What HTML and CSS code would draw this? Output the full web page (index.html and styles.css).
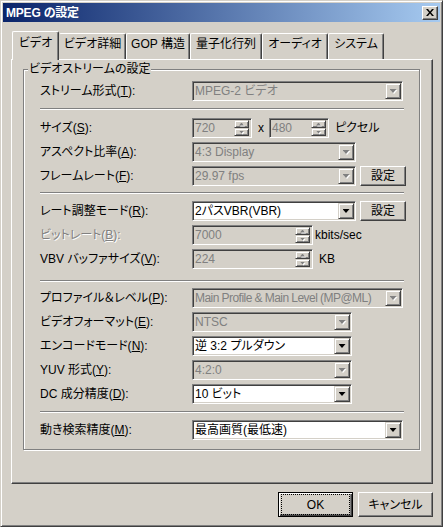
FILE: index.html
```html
<!DOCTYPE html>
<html lang="ja">
<head>
<meta charset="utf-8">
<title>MPEG の設定</title>
<link rel="stylesheet" href="styles.css">
</head>
<body>
<div class="window">
  <div class="titlebar">
    <span class="title">MPEG の設定</span>
    <span class="close"><svg width="8" height="7" viewBox="0 0 8 7"><path d="M0 0h2l2 2.4L6 0h2L5 3.5 8 7H6L4 4.6 2 7H0l3-3.5z"/></svg></span>
  </div>
  <div class="client">
    <div class="tabs">
      <div class="tab active">ビデオ</div>
      <div class="tab w2">ビデオ詳細</div>
      <div class="tab w3">GOP 構造</div>
      <div class="tab w4">量子化行列</div>
      <div class="tab w5">オーディオ</div>
      <div class="tab w6">システム</div>
    </div>
    <div class="panel">
      <div class="group">
        <div class="legend">ビデオストリームの設定</div>

        <div class="row first">
          <span class="lbl">ストリーム形式(<u>T</u>):</span>
          <div class="field dis cw-full"><span class="val">MPEG-2 ビデオ</span><span class="dd"><span class="aw"><i class="arr"></i></span></span></div>
        </div>
        <div class="sep sep1"></div>

        <div class="row">
          <span class="lbl">サイズ(<u>S</u>):</span>
          <div class="field dis sw-small"><span class="val">720</span><span class="spin"><span class="sb"><span class="aw"><i class="up"></i></span></span><span class="sb"><span class="aw"><i class="down"></i></span></span></span></div>
          <span class="times">x</span>
          <div class="field dis sw-small"><span class="val">480</span><span class="spin"><span class="sb"><span class="aw"><i class="up"></i></span></span><span class="sb"><span class="aw"><i class="down"></i></span></span></span></div>
          <span class="unit-px">ピクセル</span>
        </div>
        <div class="row">
          <span class="lbl">アスペクト比率(<u>A</u>):</span>
          <div class="field dis cw-mid"><span class="val">4:3 Display</span><span class="dd"><span class="aw"><i class="arr"></i></span></span></div>
        </div>
        <div class="row">
          <span class="lbl">フレームレート(<u>F</u>):</span>
          <div class="field dis cw-mid"><span class="val">29.97 fps</span><span class="dd"><span class="aw"><i class="arr"></i></span></span></div>
          <button class="btn set">設定</button>
        </div>
        <div class="sep sep2"></div>

        <div class="row">
          <span class="lbl">レート調整モード(<u>R</u>):</span>
          <div class="field cw-mid"><span class="val">2パスVBR(VBR)</span><span class="dd"><span class="aw"><i class="arr"></i></span></span></div>
          <button class="btn set">設定</button>
        </div>
        <div class="row">
          <span class="lbl off">ビットレート(<u>B</u>):</span>
          <div class="field dis sw-big"><span class="val">7000</span><span class="spin"><span class="sb"><span class="aw"><i class="up"></i></span></span><span class="sb"><span class="aw"><i class="down"></i></span></span></span></div>
          <span class="unit-k">kbits/sec</span>
        </div>
        <div class="row">
          <span class="lbl">VBV バッファサイズ(<u>V</u>):</span>
          <div class="field dis sw-big"><span class="val">224</span><span class="spin"><span class="sb"><span class="aw"><i class="up"></i></span></span><span class="sb"><span class="aw"><i class="down"></i></span></span></span></div>
          <span class="unit-kb">KB</span>
        </div>
        <div class="sep sep3"></div>

        <div class="row">
          <span class="lbl">プロファイル＆レベル(<u>P</u>):</span>
          <div class="field dis cw-full"><span class="val tight">Main Profile &amp; Main Level (MP@ML)</span><span class="dd"><span class="aw"><i class="arr"></i></span></span></div>
        </div>
        <div class="row">
          <span class="lbl">ビデオフォーマット(<u>E</u>):</span>
          <div class="field dis cw-short"><span class="val">NTSC</span><span class="dd"><span class="aw"><i class="arr"></i></span></span></div>
        </div>
        <div class="row">
          <span class="lbl">エンコードモード(<u>N</u>):</span>
          <div class="field cw-short"><span class="val">逆 3:2 プルダウン</span><span class="dd"><span class="aw"><i class="arr"></i></span></span></div>
        </div>
        <div class="row">
          <span class="lbl">YUV 形式(<u>Y</u>):</span>
          <div class="field dis cw-short"><span class="val">4:2:0</span><span class="dd"><span class="aw"><i class="arr"></i></span></span></div>
        </div>
        <div class="row">
          <span class="lbl">DC 成分精度(<u>D</u>):</span>
          <div class="field cw-short"><span class="val">10 ビット</span><span class="dd"><span class="aw"><i class="arr"></i></span></span></div>
        </div>
        <div class="sep sep4"></div>

        <div class="row">
          <span class="lbl">動き検索精度(<u>M</u>):</span>
          <div class="field cw-full"><span class="val">最高画質(最低速)</span><span class="dd"><span class="aw"><i class="arr"></i></span></span></div>
        </div>
      </div>
    </div>
    <div class="btnrow">
      <button class="btn big def"><span class="focus">OK</span></button>
      <button class="btn big">キャンセル</button>
    </div>
  </div>
</div>
</body>
</html>
```

FILE: styles.css
```css
* { box-sizing: border-box; }
html, body { margin: 0; padding: 0; }
body {
  width: 443px;
  height: 527px;
  overflow: hidden;
  background: #d4d0c8;
  color: #000;
  font: 12px/14px "Liberation Sans", "Noto Sans CJK JP", sans-serif;
  font-feature-settings: "palt";
}
u { text-decoration: underline; text-underline-offset: 1px; }

.window {
  width: 443px;
  height: 527px;
  background: #d4d0c8;
  border: 1px solid;
  border-color: #d4d0c8 #404040 #404040 #d4d0c8;
  box-shadow: inset 1px 1px 0 #fff, inset -1px -1px 0 #808080;
  padding: 2px;
  display: flex;
  flex-direction: column;
}

.titlebar {
  height: 19px;
  flex: none;
  background: linear-gradient(to right, #0a246a, #a6caf0);
  display: flex;
  align-items: center;
  justify-content: space-between;
  padding: 0 2px 0 3px;
}
.title { color: #fff; font-weight: bold; letter-spacing: -0.2px; }
.close {
  width: 16px;
  height: 14px;
  background: #d4d0c8;
  border: 1px solid;
  border-color: #fff #404040 #404040 #fff;
  box-shadow: inset -1px -1px 0 #808080;
  display: flex;
  align-items: center;
  justify-content: center;
}
.close svg { display: block; fill: #000; }

.client {
  flex: 1;
  display: flex;
  flex-direction: column;
  padding: 9px 7px 0 8px;
}

.tabs {
  display: flex;
  align-items: flex-end;
  height: 29px;
  margin-bottom: -1px;
  padding-left: 1px;
  position: relative;
  z-index: 1;
}
.tab {
  flex: none;
  height: 26px;
  margin-bottom: 1px;
  padding-top: 3px;
  background: #d4d0c8;
  border-top: 1px solid #fff;
  border-left: 1px solid #fff;
  border-right: 1px solid #404040;
  box-shadow: inset -1px 0 0 #808080;
  border-radius: 2px 2px 0 0;
  display: flex;
  justify-content: center;
  align-items: flex-start;
  white-space: nowrap;
}
.tab.active { width: 47px; height: 29px; margin-bottom: 0; padding-top: 4px; }
.w2 { width: 67px; border-left-color: #d4d0c8; }
.w3 { width: 64px; }
.w4 { width: 72px; }
.w5 { width: 66px; }
.w6 { width: 56px; }

.panel {
  flex: none;
  height: 425px;
  border-top: 1px solid #fff;
  border-left: 1px solid #fff;
  border-right: 1px solid #404040;
  border-bottom: 1px solid #404040;
  box-shadow: inset -1px -1px 0 #808080;
  padding: 9px 0 0 11px;
}

.group {
  width: 397px;
  border: 1px solid #808080;
  box-shadow: inset 1px 1px 0 #fff, 1px 1px 0 #fff;
  display: flex;
  flex-direction: column;
  padding-bottom: 7px;
}
.legend {
  align-self: flex-start;
  height: 14px;
  margin: -8px 0 0 4px;
  padding: 0 1px;
  background: #d4d0c8;
  white-space: nowrap;
}

.row {
  display: flex;
  align-items: center;
  height: 24px;
  padding-left: 16px;
  white-space: nowrap;
}
.row.first { margin-top: 3px; }
.lbl { width: 152px; flex: none; }
.lbl.off { color: #808080; text-shadow: 1px 1px 0 #fff; }

.sep {
  height: 2px;
  margin-left: 16px;
  margin-right: 15px;
  border-top: 1px solid #808080;
  border-bottom: 1px solid #fff;
}
.sep1 { margin-top: 5px; margin-bottom: 6px; }
.sep2 { margin-top: 4px; margin-bottom: 5px; }
.sep3 { margin-top: 9px; margin-bottom: 4px; }
.sep4 { margin-top: 5px; margin-bottom: 5px; }

.field {
  flex: none;
  height: 20px;
  border: 1px solid;
  border-color: #808080 #fff #fff #808080;
  box-shadow: inset 1px 1px 0 #404040, inset -1px -1px 0 #d4d0c8;
  padding: 1px;
  background: #fff;
  display: flex;
  align-items: center;
}
.field.dis { background: #d4d0c8; color: #808080; }
.val { flex: 1; padding-left: 1px; white-space: nowrap; min-width: 0; }
.val.tight { letter-spacing: -0.55px; }

.cw-full { width: 211px; }
.cw-mid { width: 164px; }
.cw-short { width: 160px; }
.sw-small { width: 60px; }
.sw-big { width: 121px; }

.dd {
  flex: none;
  width: 16px;
  height: 16px;
  background: #d4d0c8;
  border: 1px solid;
  border-color: #d4d0c8 #404040 #404040 #d4d0c8;
  box-shadow: inset 1px 1px 0 #fff, inset -1px -1px 0 #808080;
  display: flex;
  align-items: center;
  justify-content: center;
}
.aw { display: flex; }
.dis .aw { filter: drop-shadow(1px 1px 0 #fff); }
.arr {
  display: block;
  width: 7px;
  height: 4px;
  background: #000;
  clip-path: polygon(0 0, 100% 0, 50% 100%);
}
.dis .arr, .dis .up, .dis .down { background: #808080; }

.spin {
  flex: none;
  width: 15px;
  height: 16px;
  margin-right: 1px;
  display: flex;
  flex-direction: column;
}
.sb {
  flex: 1;
  background: #d4d0c8;
  border: 1px solid;
  border-color: #d4d0c8 #404040 #404040 #d4d0c8;
  box-shadow: inset 1px 1px 0 #fff, inset -1px -1px 0 #808080;
  display: flex;
  align-items: center;
  justify-content: center;
}
.up, .down {
  display: block;
  width: 5px;
  height: 3px;
  background: #000;
}
.up { clip-path: polygon(50% 0, 100% 100%, 0 100%); }
.down { clip-path: polygon(0 0, 100% 0, 50% 100%); }

.times { margin: 0 5px 0 6px; }
.unit-px { margin-left: 6px; }
.unit-k { margin-left: 2px; }
.unit-kb { margin-left: 6px; }

.btn {
  font: inherit;
  color: #000;
  padding: 0;
  margin: 0;
  background: #d4d0c8;
  border: 1px solid;
  border-color: #fff #404040 #404040 #fff;
  box-shadow: inset -1px -1px 0 #808080;
  display: flex;
  align-items: center;
  justify-content: center;
  border-radius: 0;
}
.btn.set { width: 46px; height: 20px; margin-left: 4px; }

.btnrow {
  display: flex;
  justify-content: flex-end;
  gap: 5px;
  margin-top: 8px;
}
.btn.big { width: 75px; height: 25px; }
.btn.def {
  border: 1px solid #000;
  box-shadow: inset 1px 1px 0 #fff, inset -1px -1px 0 #404040, inset -2px -2px 0 #808080;
}
.focus {
  display: flex;
  align-items: center;
  justify-content: center;
  width: 67px;
  height: 19px;
  outline: 1px dotted #000;
}
```
